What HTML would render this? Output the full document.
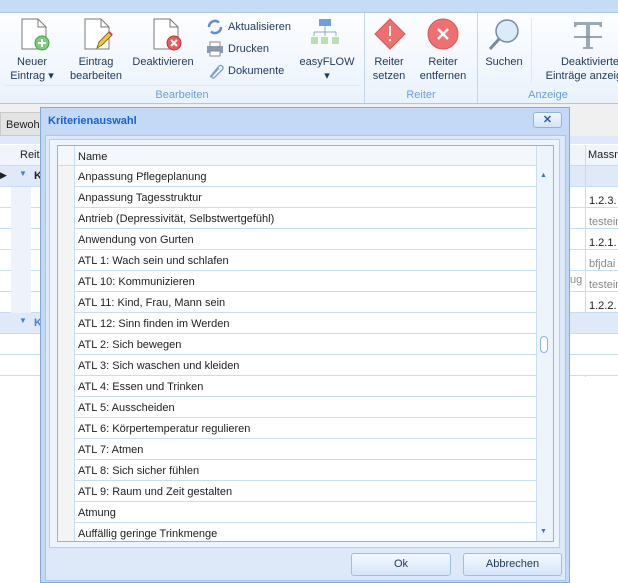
<!DOCTYPE html>
<html><head><meta charset="utf-8"><style>
*{margin:0;padding:0;box-sizing:border-box}
body{width:618px;height:583px;overflow:hidden;position:relative;background:#fff;font-family:"Liberation Sans",sans-serif;font-size:11px;color:#1e1e1e}
.a{position:absolute}
.lbl{position:absolute;text-align:center;font-size:11px;color:#1e395b;line-height:14px}
.gl{position:absolute;top:89px;font-size:11px;color:#6a9ee0;text-align:center}
.row{position:absolute;left:57px;width:480px;height:21px;border-bottom:1px solid #c9dcf5;background:#fff}
.row .ind{position:absolute;left:0;top:0;width:17px;height:21px;border-right:1px solid #c9dcf5;background:#f4f4f4}
.row span{position:absolute;left:21px;top:5px}
.bg{position:absolute;height:21px;border-bottom:1px solid #c9dcf5;background:#fff}
</style></head><body>
<div class="a" style="left:0;top:0;width:618px;height:12px;background:#c6dbf6"></div>
<div class="a" style="left:0;top:12px;width:618px;height:92px;background:linear-gradient(#fdfeff,#eaf2fc);border-top:1px solid #a9c6ef;border-bottom:1px solid #a9c6ef"></div>
<div class="a" style="left:364px;top:13px;width:1px;height:90px;background:#c0d6f3"></div>
<div class="a" style="left:477px;top:13px;width:1px;height:90px;background:#c0d6f3"></div>
<div class="a" style="left:5px;top:85px;width:355px;height:1px;background:#dce8f8"></div>
<svg class="a" style="left:20px;top:18px" width="32" height="34"><path d="M2 1h16l8 8v22H2z" fill="#fff" stroke="#7a7a7a"/><path d="M18 1v8h8" fill="none" stroke="#7a7a7a"/><circle cx="22" cy="25" r="7" fill="#7ccf78" stroke="#4a9a4a"/><path d="M22 21v8M18 25h8" stroke="#fff" stroke-width="2"/></svg>
<svg class="a" style="left:83px;top:18px" width="32" height="34"><path d="M2 1h16l8 8v22H2z" fill="#fff" stroke="#7a7a7a"/><path d="M18 1v8h8" fill="none" stroke="#7a7a7a"/><path d="M14 30l2-6 10-10 3 3-10 10z" fill="#f5c542" stroke="#8a6a1a"/><path d="M26 14l3 3" stroke="#d44" stroke-width="2"/></svg>
<svg class="a" style="left:152px;top:18px" width="32" height="34"><path d="M2 1h16l8 8v22H2z" fill="#fff" stroke="#7a7a7a"/><path d="M18 1v8h8" fill="none" stroke="#7a7a7a"/><circle cx="22" cy="25" r="7" fill="#e85c5c" stroke="#b33"/><path d="M19 22l6 6M25 22l-6 6" stroke="#fff" stroke-width="2"/></svg>
<svg class="a" style="left:206px;top:18px" width="18" height="18"><path d="M3 9a6 6 0 0 1 10-4.5M15 9a6 6 0 0 1-10 4.5" fill="none" stroke="#5b8fd6" stroke-width="2.5"/></svg>
<svg class="a" style="left:206px;top:41px" width="18" height="16"><rect x="4" y="1" width="10" height="5" fill="#fff" stroke="#888"/><rect x="1" y="5" width="16" height="7" fill="#8a9bb0"/><rect x="4" y="10" width="10" height="5" fill="#fff" stroke="#888"/></svg>
<svg class="a" style="left:206px;top:62px" width="18" height="18"><path d="M4 15L13 4a2.5 2.5 0 0 1 3.5 3.5L8 16a1.5 1.5 0 0 1-2-2l7-8" fill="none" stroke="#7e9ec8" stroke-width="1.3"/></svg>
<svg class="a" style="left:310px;top:18px" width="30" height="32"><rect x="9" y="1" width="12" height="7" fill="#6f9fe0"/><path d="M15 8v6M4 14h22M4 14v4M15 14v4M26 14v4" stroke="#9ab" fill="none"/><rect x="1" y="19" width="7" height="7" fill="#b6e2b0"/><rect x="11" y="19" width="7" height="7" fill="#b6e2b0"/><rect x="22" y="19" width="7" height="7" fill="#b6e2b0"/></svg>
<svg class="a" style="left:374px;top:18px" width="32" height="32"><path d="M16 1l15 15-15 15L1 16z" fill="#ef6f6f" stroke="#d55"/><path d="M16 8v10" stroke="#fff" stroke-width="2"/><circle cx="16" cy="22" r="1.3" fill="#fff"/></svg>
<svg class="a" style="left:427px;top:18px" width="32" height="32"><circle cx="16" cy="16" r="15" fill="#ef7070" stroke="#d55"/><path d="M11 11l10 10M21 11l-10 10" stroke="#fff" stroke-width="2.5"/></svg>
<svg class="a" style="left:487px;top:18px" width="34" height="34"><circle cx="20" cy="13" r="11" fill="#d8ecfb" stroke="#7a8a9a" stroke-width="1.5"/><path d="M12 21L3 31" stroke="#7a8a9a" stroke-width="3"/></svg>
<svg class="a" style="left:572px;top:20px" width="32" height="30"><path d="M2 2h28v5h-2l-1-2H18v22h3v2H11v-2h3V5H5L4 7H2z" fill="#9aa9b8"/><path d="M2 17h28" stroke="#7a8a9a" stroke-width="1.5"/></svg>
<div class="lbl" style="left:2px;top:55px;width:60px">Neuer<br>Eintrag ▾</div>
<div class="lbl" style="left:64px;top:55px;width:64px">Eintrag<br>bearbeiten</div>
<div class="lbl" style="left:130px;top:55px;width:66px">Deaktivieren</div>
<div class="lbl" style="left:228px;top:20px;text-align:left">Aktualisieren</div>
<div class="lbl" style="left:228px;top:42px;text-align:left">Drucken</div>
<div class="lbl" style="left:228px;top:64px;text-align:left">Dokumente</div>
<div class="lbl" style="left:296px;top:55px;width:62px">easyFLOW<br>▾</div>
<div class="lbl" style="left:368px;top:55px;width:42px">Reiter<br>setzen</div>
<div class="lbl" style="left:415px;top:55px;width:56px">Reiter<br>entfernen</div>
<div class="lbl" style="left:480px;top:55px;width:48px">Suchen</div>
<div class="lbl" style="left:540px;top:55px;width:100px">Deaktivierte<br>Einträge anzeigen</div>
<div class="a" style="left:531px;top:18px;width:1px;height:65px;background:#dce8f8"></div>
<div class="gl" style="left:0;width:364px">Bearbeiten</div>
<div class="gl" style="left:365px;width:112px">Reiter</div>
<div class="gl" style="left:478px;width:140px">Anzeige</div>
<div class="a" style="left:0;top:104px;width:618px;height:40px;background:#f0f0f0"></div>
<div class="a" style="left:0;top:112px;width:42px;height:24px;background:#e3e3e3;border:1px solid #c9c9c9;padding:6px 0 0 5px">Bewohn</div>
<div class="a" style="left:0;top:136px;width:618px;height:8px;background:#dfe9f7"></div>
<div class="bg" style="left:0;top:145px;width:42px;background:#f1f5fb;padding:4px 0 0 20px">Reit</div>
<div class="bg" style="left:570px;top:145px;width:48px;background:#f1f5fb;padding:4px 0 0 18px">Massn</div>
<div class="bg" style="left:0;top:166px;width:42px;background:#dfe9f8"><span style="position:absolute;left:0;top:4px;font-size:9px">▶</span><span style="position:absolute;left:19px;top:3px;font-size:8px;color:#4a7fd0">▼</span><b style="position:absolute;left:34px;top:4px">K</b></div>
<div class="bg" style="left:570px;top:166px;width:48px;background:#dfe9f8"></div>
<div class="a" style="left:0;top:187px;width:42px;height:126px;background:repeating-linear-gradient(#fff 0 20px,#c9dcf5 20px 21px)"></div>
<div class="a" style="left:11px;top:187px;width:20px;height:126px;background:#eef3fb"></div>
<div class="a" style="left:570px;top:187px;width:48px;height:126px;background:repeating-linear-gradient(#fff 0 20px,#c9dcf5 20px 21px)"></div>
<div class="a" style="left:585px;top:145px;width:1px;height:232px;background:#c9dcf5"></div>
<div class="a" style="left:589px;top:191px;line-height:21px;font-size:11px">1.2.3.<br><span style="color:#888">testein</span><br>1.2.1.<br><span style="color:#888">bfjdai</span><br><span style="color:#888">testein</span><br>1.2.2.</div>
<div class="a" style="left:570px;top:274px;color:#888;font-size:11px">ug</div>
<div class="bg" style="left:0;top:313px;width:42px;background:#dfe9f8"><span style="position:absolute;left:19px;top:3px;font-size:8px;color:#4a7fd0">▼</span><b style="position:absolute;left:34px;top:4px;color:#4a7fd0">K</b></div>
<div class="bg" style="left:570px;top:313px;width:48px;background:#dfe9f8"></div>
<div class="a" style="left:0;top:334px;width:42px;height:42px;background:repeating-linear-gradient(#fff 0 20px,#c9dcf5 20px 21px)"></div>
<div class="a" style="left:570px;top:334px;width:48px;height:42px;background:repeating-linear-gradient(#fff 0 20px,#c9dcf5 20px 21px)"></div>
<div class="a" style="left:40px;top:107px;width:530px;height:476px;background:#c3d9f6;border:1px solid #7fa9e3"></div>
<div class="a" style="left:48px;top:115px;font-weight:bold;color:#1a5fd0;font-size:11px">Kriterienauswahl</div>
<div class="a" style="left:533px;top:112px;width:29px;height:16px;border:1px solid #8fb2e6;border-radius:3px;background:linear-gradient(#f4f8fe,#d2e2f8);text-align:center;font-weight:bold;color:#2a5ab0;line-height:14px">✕</div>
<div class="a" style="left:45px;top:135px;width:521px;height:446px;background:#dde9f8;border:1px solid #a9c6ef"></div>
<div class="a" style="left:49px;top:139px;width:511px;height:409px;border:1px solid #b5cdf0;background:#eef4fc"></div>
<div class="a" style="left:57px;top:145px;width:497px;height:397px;border:1px solid #8fb3e8;background:#fff"></div>
<div class="a" style="left:58px;top:146px;width:478px;height:20px;background:#f4f8fd;border-bottom:1px solid #c9dcf5"></div>
<div class="a" style="left:74px;top:146px;width:1px;height:20px;background:#c9dcf5"></div>
<div class="a" style="left:78px;top:151px">Name</div>
<div class="a" style="left:536px;top:146px;width:17px;height:395px;background:#eef4fc;border-left:1px solid #c9dcf5"></div>
<div class="a" style="left:540px;top:172px;font-size:7px;color:#3a72d0">▲</div>
<div class="a" style="left:540px;top:336px;width:8px;height:17px;border:1px solid #8fb3e8;border-radius:4px;background:#fff"></div>
<div class="a" style="left:540px;top:528px;font-size:7px;color:#3a72d0">▼</div>
<div class="a" style="left:351px;top:553px;width:100px;height:23px;border:1px solid #9dbdeb;border-radius:3px;background:linear-gradient(#f4f8fe,#d6e5f9);text-align:center;line-height:21px;color:#1e395b">Ok</div>
<div class="a" style="left:463px;top:553px;width:99px;height:23px;border:1px solid #9dbdeb;border-radius:3px;background:linear-gradient(#f4f8fe,#d6e5f9);text-align:center;line-height:21px;color:#1e395b">Abbrechen</div>
<div class="row" style="top:166px;left:58px;width:478px"><div class="ind"></div><span style="left:20px">Anpassung Pflegeplanung</span></div>
<div class="row" style="top:187px;left:58px;width:478px"><div class="ind"></div><span style="left:20px">Anpassung Tagesstruktur</span></div>
<div class="row" style="top:208px;left:58px;width:478px"><div class="ind"></div><span style="left:20px">Antrieb (Depressivität, Selbstwertgefühl)</span></div>
<div class="row" style="top:229px;left:58px;width:478px"><div class="ind"></div><span style="left:20px">Anwendung von Gurten</span></div>
<div class="row" style="top:250px;left:58px;width:478px"><div class="ind"></div><span style="left:20px">ATL 1: Wach sein und schlafen</span></div>
<div class="row" style="top:271px;left:58px;width:478px"><div class="ind"></div><span style="left:20px">ATL 10: Kommunizieren</span></div>
<div class="row" style="top:292px;left:58px;width:478px"><div class="ind"></div><span style="left:20px">ATL 11: Kind, Frau, Mann sein</span></div>
<div class="row" style="top:313px;left:58px;width:478px"><div class="ind"></div><span style="left:20px">ATL 12: Sinn finden im Werden</span></div>
<div class="row" style="top:334px;left:58px;width:478px"><div class="ind"></div><span style="left:20px">ATL 2: Sich bewegen</span></div>
<div class="row" style="top:355px;left:58px;width:478px"><div class="ind"></div><span style="left:20px">ATL 3: Sich waschen und kleiden</span></div>
<div class="row" style="top:376px;left:58px;width:478px"><div class="ind"></div><span style="left:20px">ATL 4: Essen und Trinken</span></div>
<div class="row" style="top:397px;left:58px;width:478px"><div class="ind"></div><span style="left:20px">ATL 5: Ausscheiden</span></div>
<div class="row" style="top:418px;left:58px;width:478px"><div class="ind"></div><span style="left:20px">ATL 6: Körpertemperatur regulieren</span></div>
<div class="row" style="top:439px;left:58px;width:478px"><div class="ind"></div><span style="left:20px">ATL 7: Atmen</span></div>
<div class="row" style="top:460px;left:58px;width:478px"><div class="ind"></div><span style="left:20px">ATL 8: Sich sicher fühlen</span></div>
<div class="row" style="top:481px;left:58px;width:478px"><div class="ind"></div><span style="left:20px">ATL 9: Raum und Zeit gestalten</span></div>
<div class="row" style="top:502px;left:58px;width:478px"><div class="ind"></div><span style="left:20px">Atmung</span></div>
<div class="row" style="top:523px;left:58px;width:478px;height:18px;border-bottom:none;overflow:hidden"><div class="ind"></div><span style="left:20px">Auffällig geringe Trinkmenge</span></div>
</body></html>
